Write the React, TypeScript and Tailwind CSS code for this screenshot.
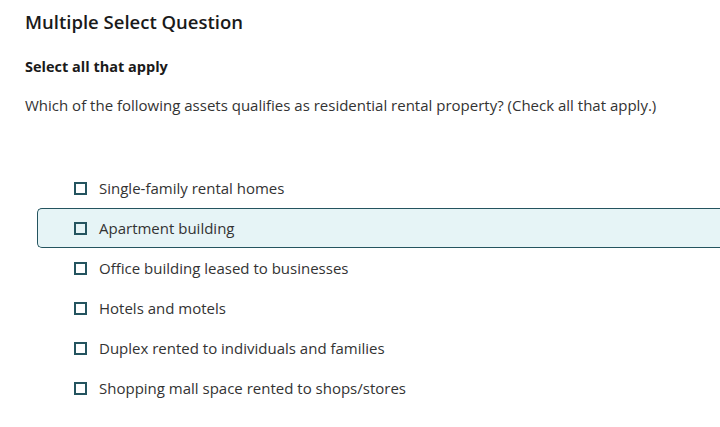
import React from "react";

const options = [
  "Single-family rental homes",
  "Apartment building",
  "Office building leased to businesses",
  "Hotels and motels",
  "Duplex rented to individuals and families",
  "Shopping mall space rented to shops/stores",
];

export default function App() {
  return (
    <div className="w-[720px] h-[427px] bg-white overflow-hidden text-[#222]" style={{ fontFamily: '"Open Sans", "Liberation Sans", sans-serif' }}>
      <div className="pl-[25px] pt-[9px]">
        <h1 className="text-[18.5px] leading-[26px] font-semibold text-[#1a1a1a]">Multiple Select Question</h1>
        <h2 className="mt-[23px] text-[14.5px] leading-[18px] font-bold text-[#1a1a1a]">Select all that apply</h2>
        <p className="mt-[19px] text-[15px] leading-[20px] text-[#333]">
          Which of the following assets qualifies as residential rental property? (Check all that apply.)
        </p>
      </div>
      <div className="mt-[53px] ml-[37px] flex flex-col">
        {options.map((o, i) => (
          <div
            key={o}
            className={
              "h-[40px] flex items-center pl-[36px] border rounded-l-[5px] border-r-0 " +
              (i === 1 ? "bg-[#e6f4f6] border-[#24545f]" : "border-transparent")
            }
          >
            <span className="w-[13px] h-[13px] border-2 border-[#24545f] shrink-0" />
            <span className="ml-[12px] text-[15px] text-[#333]">{o}</span>
          </div>
        ))}
      </div>
    </div>
  );
}
